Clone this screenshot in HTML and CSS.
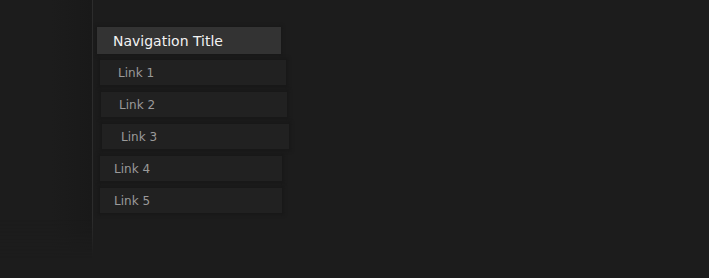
FILE: index.html
```html
<!DOCTYPE html>
<html lang="en">
<head>
    <meta charset="UTF-8">
    <title>Navigation</title>
    <link rel="stylesheet" href="styles.css">
</head>
<body>
    <div class="page">
        <!-- left rail -->
        <div class="rail"></div>

        <!-- nav list -->
        <ul class="nav">
            <li class="nav-title">Navigation Title</li>
            <li class="nav-item shift-1"><a href="#">Link 1</a></li>
            <li class="nav-item shift-2"><a href="#">Link 2</a></li>
            <li class="nav-item shift-3"><a href="#">Link 3</a></li>
            <li class="nav-item"><a href="#">Link 4</a></li>
            <li class="nav-item"><a href="#">Link 5</a></li>
        </ul>
    </div>
</body>
</html>
```

FILE: styles.css
```css
html, body {
    margin: 0;
    padding: 0;
    background-color: #1c1c1c;
    font-family: "DejaVu Sans", Verdana, sans-serif;
}
.page {
    display: flex;
    align-items: flex-start;
    height: 278px;
}
.rail {
    width: 92px;
    height: 258px;
    flex-shrink: 0;
    background: linear-gradient(to right, #1c1c1c 0%, #1c1c1c 55%, #191919 100%);
    border-right: 1px solid #2c2c2c;
    -webkit-mask-image: linear-gradient(to bottom, #000 85%, transparent 100%);
}
.nav {
    list-style: none;
    margin: 27px 0 0 4px;
    padding: 0;
    display: flex;
    flex-direction: column;
    align-items: flex-start;
    gap: 7px;
}
.nav-title {
    width: 184px;
    height: 27px;
    line-height: 28px;
    margin-bottom: -1px;
    box-sizing: border-box;
    padding-left: 16px;
    background-color: #333333;
    color: #f2f2f2;
    font-size: 14px;
    box-shadow: 0 0 3px 1px #181818;
}
.nav-item {
    width: 182px;
    height: 25px;
    margin-left: 3px;
    background-color: #212121;
    box-shadow: 0 0 3px 2px #181818;
}
.nav-item a {
    display: block;
    line-height: 26px;
    padding-left: 14px;
    color: #9a9a9a;
    font-size: 12px;
    text-decoration: none;
}
.shift-1 {
    width: 186px;
}
.shift-1 a {
    padding-left: 18px;
}
.shift-2 {
    width: 186px;
    margin-left: 4px;
}
.shift-2 a {
    padding-left: 18px;
}
.shift-3 {
    width: 187px;
    margin-left: 5px;
}
.shift-3 a {
    padding-left: 19px;
}
```
